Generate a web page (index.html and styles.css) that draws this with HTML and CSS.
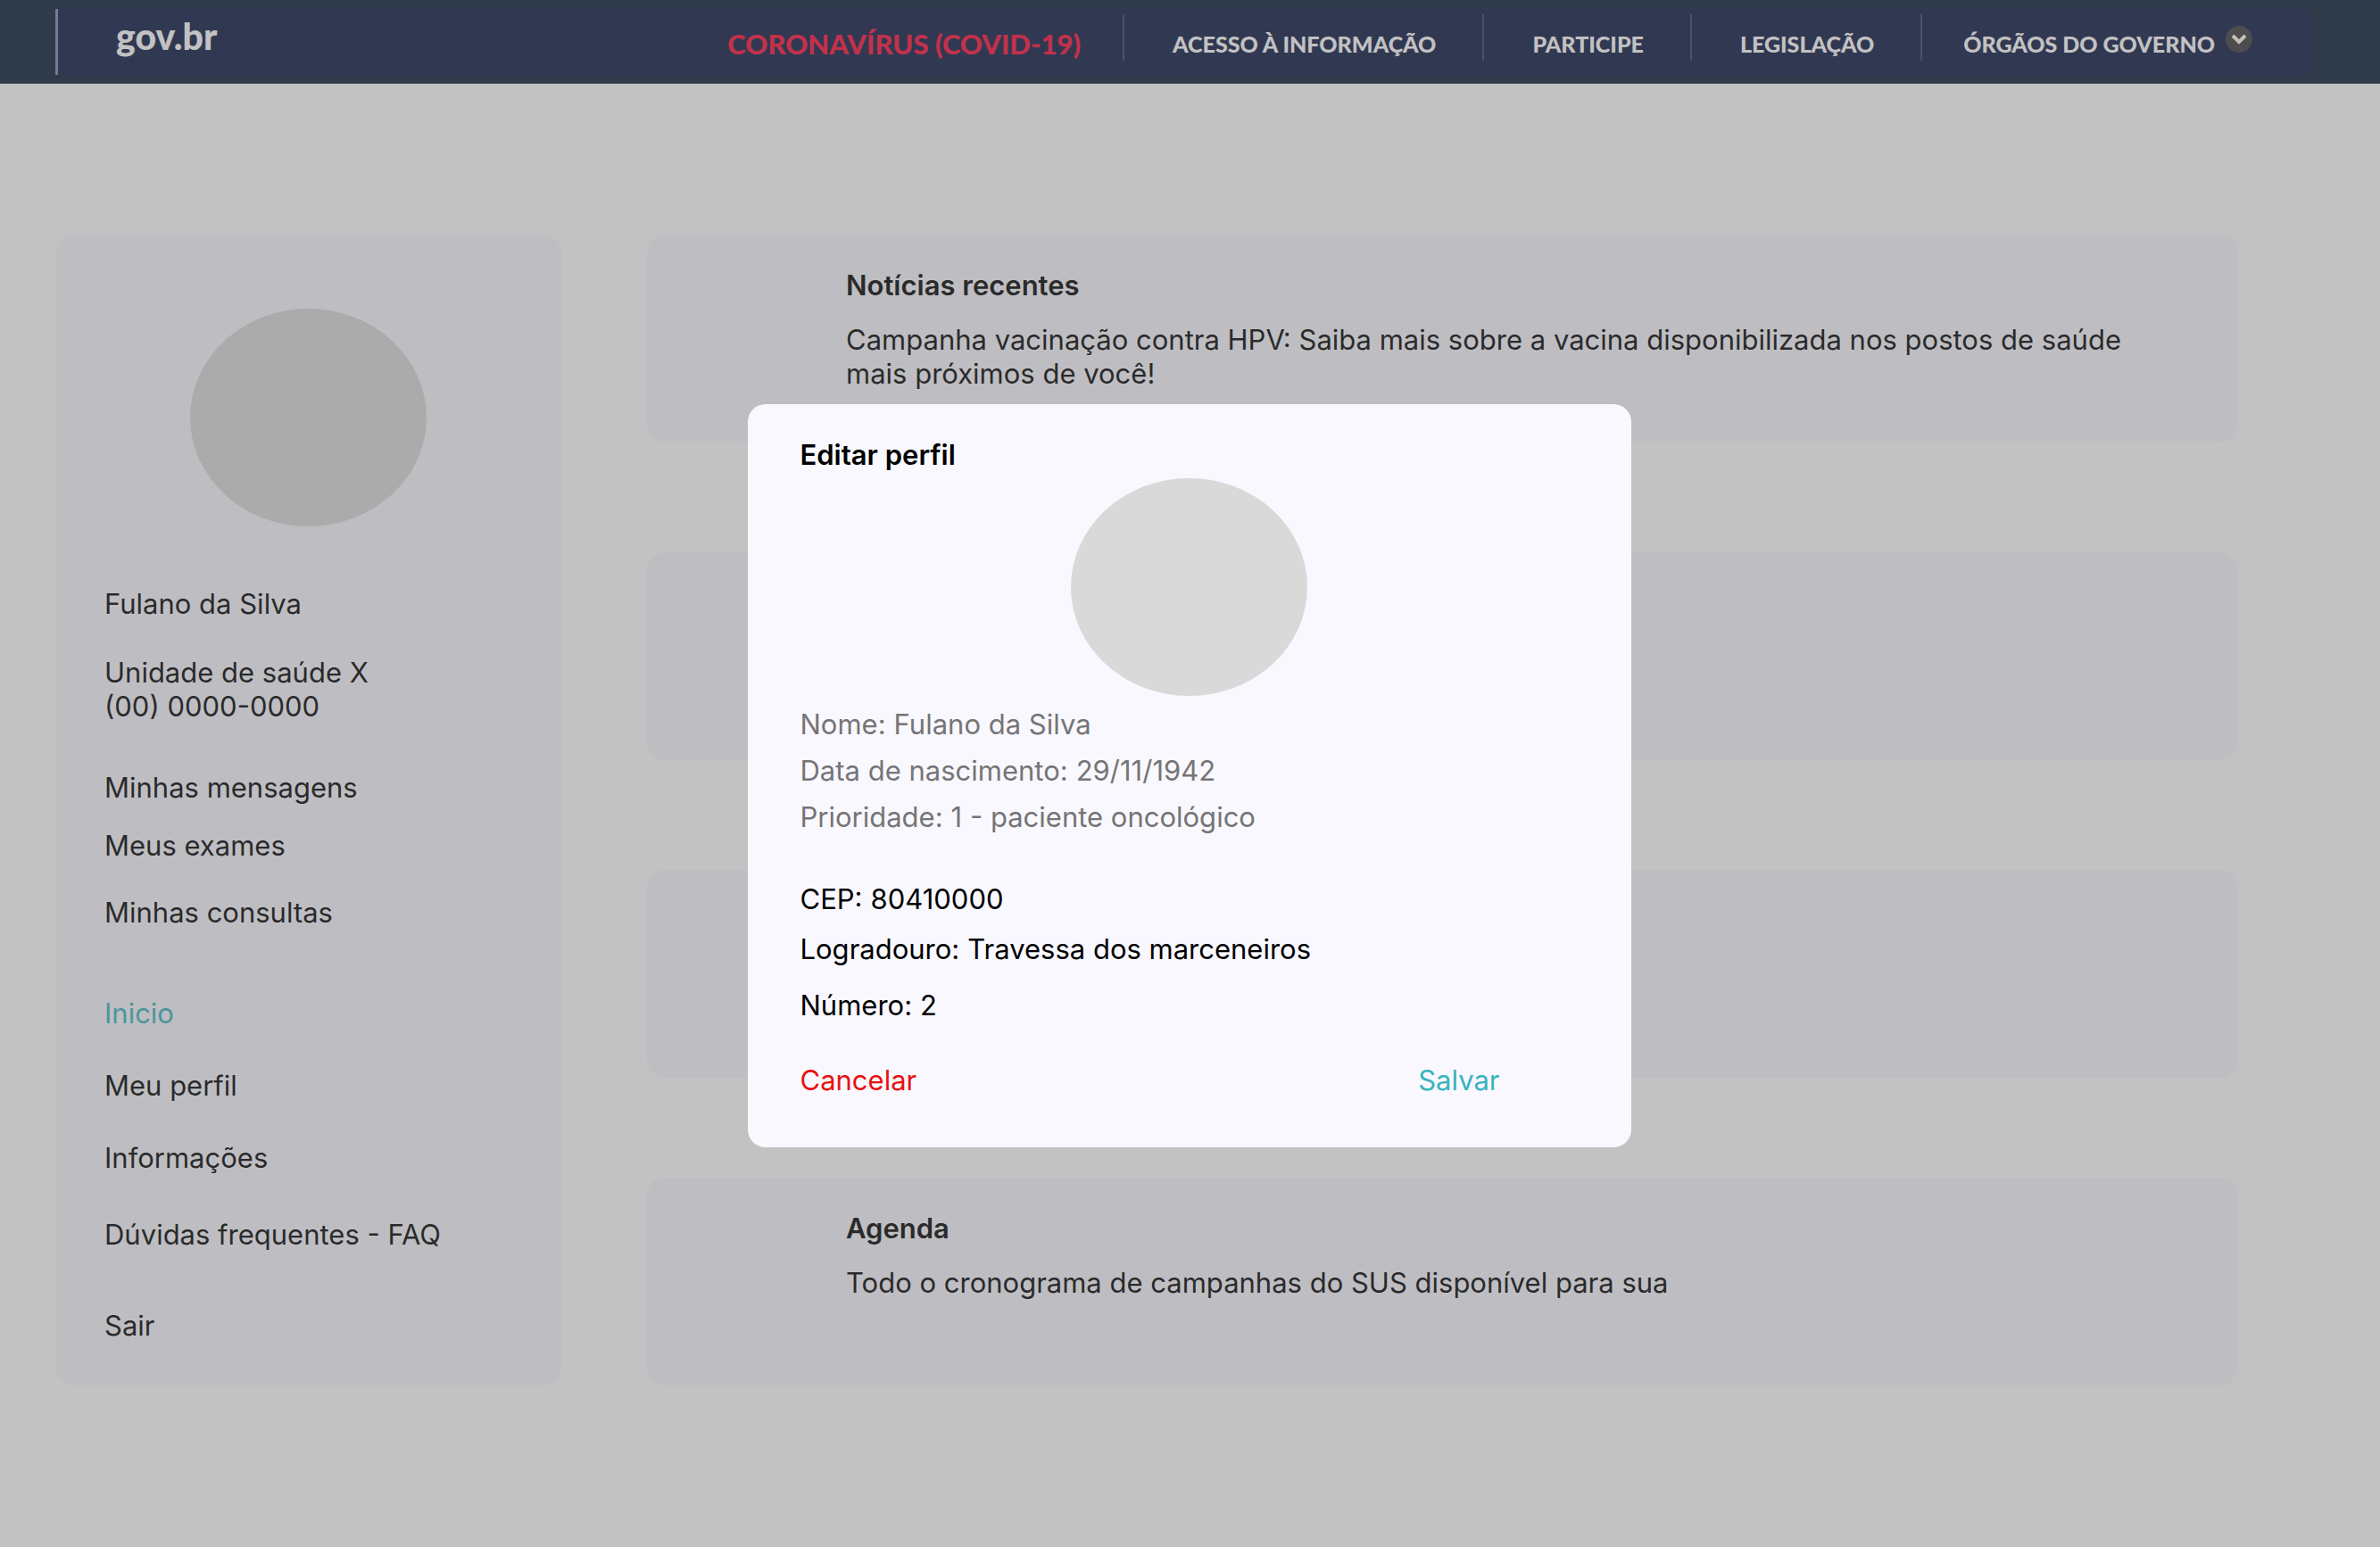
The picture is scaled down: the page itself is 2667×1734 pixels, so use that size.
FILE: index.html
```html
<!DOCTYPE html>
<html lang="pt-BR">
<head>
  <meta charset="utf-8">
  <meta name="viewport" content="width=device-width, initial-scale=1">
  <title>Editar perfil</title>
  <link rel="stylesheet" href="styles.css">
</head>
<body>
  <header class="topbar">
    <div class="topbar-inner">
      <a class="brand" href="#">gov.br</a>
      <nav class="gov-nav" aria-label="Governo">
        <a class="gov-link gov-alert" href="#">CORONAVÍRUS (COVID-19)</a>
        <a class="gov-link" href="#">ACESSO À INFORMAÇÃO</a>
        <a class="gov-link" href="#">PARTICIPE</a>
        <a class="gov-link" href="#">LEGISLAÇÃO</a>
        <button class="gov-link gov-menu" type="button">ÓRGÃOS DO GOVERNO
          <svg class="chevron" viewBox="0 0 30 30" aria-hidden="true">
            <circle cx="15" cy="15" r="15" fill="#3c3b40"/>
            <path d="M8 11l7 7 7-7" fill="none" stroke="#fffbe8" stroke-width="4"/>
          </svg>
        </button>
      </nav>
    </div>
  </header>

  <div class="layout">
    <aside class="card sidebar">
      <div class="avatar"></div>
      <p class="user-name">Fulano da Silva</p>
      <p class="unit">Unidade de saúde X<br>(00) 0000-0000</p>
      <nav class="shortcuts" aria-label="Atalhos">
        <a href="#">Minhas mensagens</a>
        <a href="#">Meus exames</a>
        <a class="shortcut-last" href="#">Minhas consultas</a>
      </nav>
      <nav class="menu" aria-label="Menu">
        <a class="current" href="#" aria-current="page">Inicio</a>
        <a href="#">Meu perfil</a>
        <a href="#">Informações</a>
        <a class="faq" href="#">Dúvidas frequentes - FAQ</a>
      </nav>
      <a class="logout" href="#">Sair</a>
    </aside>

    <main class="feed">
      <article class="card item">
        <h2>Notícias recentes</h2>
        <p>Campanha vacinação contra HPV: Saiba mais sobre a vacina disponibilizada nos postos de saúde mais próximos de você!</p>
      </article>
      <article class="card item"></article>
      <article class="card item"></article>
      <article class="card item agenda">
        <h2>Agenda</h2>
        <p>Todo o cronograma de campanhas do SUS disponível para sua</p>
      </article>
    </main>
  </div>

  <div class="overlay">
    <form class="dialog" role="dialog" aria-modal="true" aria-labelledby="dialog-title">
      <h2 id="dialog-title">Editar perfil</h2>
      <div class="avatar"></div>
      <div class="fields fixed-fields">
        <div class="field"><label for="nome">Nome:</label><input id="nome" value="Fulano da Silva" readonly></div>
        <div class="field"><label for="nascimento">Data de nascimento:</label><input id="nascimento" value="29/11/1942" readonly></div>
        <div class="field"><label for="prioridade">Prioridade:</label><input id="prioridade" value="1 - paciente oncológico" readonly></div>
      </div>
      <div class="fields address-fields">
        <div class="field"><label for="cep">CEP:</label><input id="cep" value="80410000"></div>
        <div class="field"><label for="logradouro">Logradouro:</label><input id="logradouro" value="Travessa dos marceneiros"></div>
        <div class="field field-last"><label for="numero">Número:</label><input id="numero" value="2"></div>
      </div>
      <div class="actions">
        <button class="cancel" type="button">Cancelar</button>
        <button class="save" type="submit">Salvar</button>
      </div>
    </form>
  </div>
</body>
</html>
```
FILE: styles.css
```css
* {
  box-sizing: border-box;
}

body {
  margin: 0;
  background: #fff;
  color: #000;
  font: 31px/38px Inter, "Liberation Sans", sans-serif;
}

h2,
p {
  margin: 0;
  font-size: inherit;
}

h2 {
  font-weight: 600;
}

a {
  color: inherit;
  text-decoration: none;
}

button,
input {
  margin: 0;
  padding: 0;
  border: 0;
  background: none;
  color: inherit;
  font: inherit;
}

button {
  cursor: pointer;
}

/* Government bar */
.topbar {
  padding: 10px 81px 9px 62px;
  border-bottom: 1px solid #3e4a64;
  background: #0a1b38;
}

.topbar-inner {
  display: flex;
  justify-content: space-between;
  height: 74px;
  padding: 0 62px 0 65px;
  border-left: 3px solid #868aa0;
  background: #0d1943;
  color: #fff;
  font-family: Lato, "Open Sans", sans-serif;
  font-weight: 900;
}

.brand {
  font-size: 41px;
  line-height: 62px;
}

.gov-nav {
  display: flex;
  align-items: center;
  height: 64px;
}

.gov-link {
  display: flex;
  align-items: center;
  height: 52px;
  padding: 14px 52px 0 54px;
  border-left: 2px solid #38446a;
  font-size: 25px;
}

.gov-alert {
  padding-right: 47px;
  padding-left: 0;
  border-left: 0;
  color: #ff0c38;
  font-size: 31px;
}

.gov-menu {
  gap: 12px;
  padding-right: 0;
  padding-left: 46px;
}

.chevron {
  width: 30px;
  height: 30px;
  margin-bottom: 10px;
}

/* Page */
.layout {
  display: grid;
  grid-template-columns: 566px 1fr;
  gap: 96px;
  padding: 169px 160px 181px 63px;
}

.card {
  border-radius: 20px;
  background: #f9f8ff;
}

.avatar {
  width: 265px;
  height: 244px;
  margin: 0 auto;
  border-radius: 50%;
  background: #d9d9d9;
}

.sidebar {
  display: flex;
  flex-direction: column;
  padding: 83px 56px 47px 54px;
}

.user-name {
  margin-top: 68px;
}

.unit {
  margin-top: 39px;
}

.shortcuts,
.menu {
  display: flex;
  flex-direction: column;
}

.shortcuts {
  gap: 27px;
  margin-top: 53px;
}

.shortcut-last {
  margin-top: 10px;
}

.menu {
  gap: 43px;
  margin-top: 75px;
}

.current {
  color: #38b6bf;
}

.faq {
  margin-top: 5px;
}

.logout {
  margin-top: 64px;
}

.feed {
  display: flex;
  flex-direction: column;
  gap: 123px;
}

.item {
  min-height: 233px;
  padding: 38px 90px 36px 223px;
}

.item p {
  margin-top: 23px;
}

.agenda {
  margin-top: -11px;
}

/* Profile editor */
.overlay {
  position: fixed;
  inset: 0;
  display: grid;
  place-items: center;
  padding: 4px 2px 0 0;
  background: rgba(104, 104, 104, 0.404);
}

.dialog {
  width: 990px;
  max-width: 100%;
  padding: 38px 59px 56px;
  border-radius: 20px;
  background: #f9f8ff;
}

.dialog .avatar {
  margin-top: 7px;
}

.fields {
  display: flex;
  flex-direction: column;
}

.fixed-fields {
  gap: 14px;
  margin-top: 13px;
  color: #757575;
}

.address-fields {
  gap: 18px;
  margin-top: 54px;
}

.field {
  display: flex;
  gap: 9px;
}

.field input {
  flex: 1;
  min-width: 0;
  height: 38px;
}

.field-last {
  margin-top: 7px;
}

.actions {
  display: flex;
  justify-content: space-between;
  margin-top: 46px;
  padding-right: 88px;
}

.cancel {
  color: #e81010;
}

.save {
  color: #38b3bd;
}
```
